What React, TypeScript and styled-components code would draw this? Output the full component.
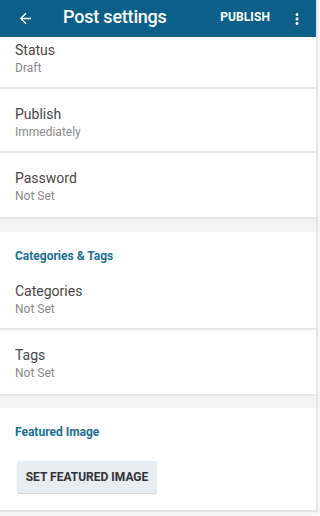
import styled, { createGlobalStyle } from "styled-components";

const GlobalStyle = createGlobalStyle`
  html, body {
    margin: 0;
    padding: 0;
    background: #ffffff;
    font-family: Roboto, "Noto Sans", Arial, sans-serif;
  }
`;

const Screen = styled.div`
  width: 320px;
  height: 516px;
  overflow: hidden;
  background: #f7f7f7;
`;

const Column = styled.div`
  width: 316px;
  height: 513px;
  border-right: 2px solid #e4e4e4;
  background: #f3f3f3;
  display: flex;
  flex-direction: column;
  overflow: hidden;
`;

const AppBar = styled.header`
  height: 37px;
  flex-shrink: 0;
  background: #0b5f88;
  color: #ffffff;
  display: flex;
  align-items: center;
  padding: 0 0 0 15px;
  box-sizing: border-box;
`;

const IconButton = styled.span<{ $w?: number }>`
  display: flex;
  align-items: center;
  justify-content: center;
  width: ${(p) => p.$w ?? 20}px;
  height: 28px;
`;

const Title = styled.h1`
  margin: -3px 0 0 28px;
  flex: 1;
  font-size: 18px;
  font-weight: 500;
  letter-spacing: -0.2px;
  line-height: 24px;
`;

const Action = styled.span`
  font-size: 12px;
  font-weight: 700;
  letter-spacing: 0.1px;
  margin: -3px 18px 0 0;
`;

const Card = styled.section`
  background: #ffffff;
  border-bottom: 2px solid #e6e6e6;
  flex-shrink: 0;
`;

const Gap = styled.div<{ $h: number }>`
  height: ${(p) => p.$h}px;
  flex-shrink: 0;
`;

const SectionHeader = styled.h2`
  margin: 0;
  padding: 17px 15px 3px;
  font-size: 12px;
  line-height: 14px;
  font-weight: 700;
  color: #1a6e97;
`;

const Row = styled.div<{ $top?: number; $last?: boolean }>`
  padding: ${(p) => p.$top ?? 15}px 15px ${(p) => (p.$last ? 13 : 11)}px;
  border-bottom: ${(p) => (p.$last ? "none" : "2px solid #e8e8e8")};
  display: flex;
  flex-direction: column;
`;

const RowTitle = styled.span`
  font-size: 14px;
  line-height: 20px;
  color: #474747;
`;

const RowValue = styled.span`
  font-size: 12px;
  line-height: 16px;
  color: #8a8a8a;
`;

const ButtonArea = styled.div`
  padding: 19px 17px 17px;
`;

const FlatButton = styled.button`
  height: 32px;
  width: 140px;
  border: none;
  border-radius: 2px;
  background: #e7edf3;
  box-shadow: 0 1px 1px rgba(0, 0, 0, 0.18);
  font-family: Roboto, "Noto Sans", Arial, sans-serif;
  font-size: 12px;
  font-weight: 700;
  color: #333333;
  padding: 0;
`;

const BackArrow = () => (
  <svg width="17" height="17" viewBox="0 0 24 24" fill="#ffffff">
    <path d="M20 11H7.83l5.59-5.59L12 4l-8 8 8 8 1.41-1.41L7.83 13H20v-2z" />
  </svg>
);

const MoreVert = () => (
  <svg width="18" height="18" viewBox="0 0 24 24" fill="#ffffff">
    <path d="M12 8c1.1 0 2-.9 2-2s-.9-2-2-2-2 .9-2 2 .9 2 2 2zm0 2c-1.1 0-2 .9-2 2s.9 2 2 2 2-.9 2-2-.9-2-2-2zm0 6c-1.1 0-2 .9-2 2s.9 2 2 2 2-.9 2-2-.9-2-2-2z" />
  </svg>
);

type Setting = { title: string; value: string };

const general: Setting[] = [
  { title: "Status", value: "Draft" },
  { title: "Publish", value: "Immediately" },
  { title: "Password", value: "Not Set" },
];

const taxonomy: Setting[] = [
  { title: "Categories", value: "Not Set" },
  { title: "Tags", value: "Not Set" },
];

export default function App() {
  return (
    <>
      <GlobalStyle />
      <Screen>
        <Column>
          <AppBar>
            <IconButton>
              <BackArrow />
            </IconButton>
            <Title>Post settings</Title>
            <Action>PUBLISH</Action>
            <IconButton $w={18} style={{ marginRight: 10 }}>
              <MoreVert />
            </IconButton>
          </AppBar>

          <Card>
            {general.map((s, i) => (
              <Row key={s.title} $top={i === 0 ? 3 : 15} $last={i === general.length - 1}>
                <RowTitle>{s.title}</RowTitle>
                <RowValue>{s.value}</RowValue>
              </Row>
            ))}
          </Card>
          <Gap $h={13} />

          <Card>
            <SectionHeader>Categories &amp; Tags</SectionHeader>
            {taxonomy.map((s, i) => (
              <Row key={s.title} $last={i === taxonomy.length - 1}>
                <RowTitle>{s.title}</RowTitle>
                <RowValue>{s.value}</RowValue>
              </Row>
            ))}
          </Card>
          <Gap $h={12} />

          <Card>
            <SectionHeader>Featured Image</SectionHeader>
            <ButtonArea>
              <FlatButton>SET FEATURED IMAGE</FlatButton>
            </ButtonArea>
          </Card>
        </Column>
      </Screen>
    </>
  );
}
